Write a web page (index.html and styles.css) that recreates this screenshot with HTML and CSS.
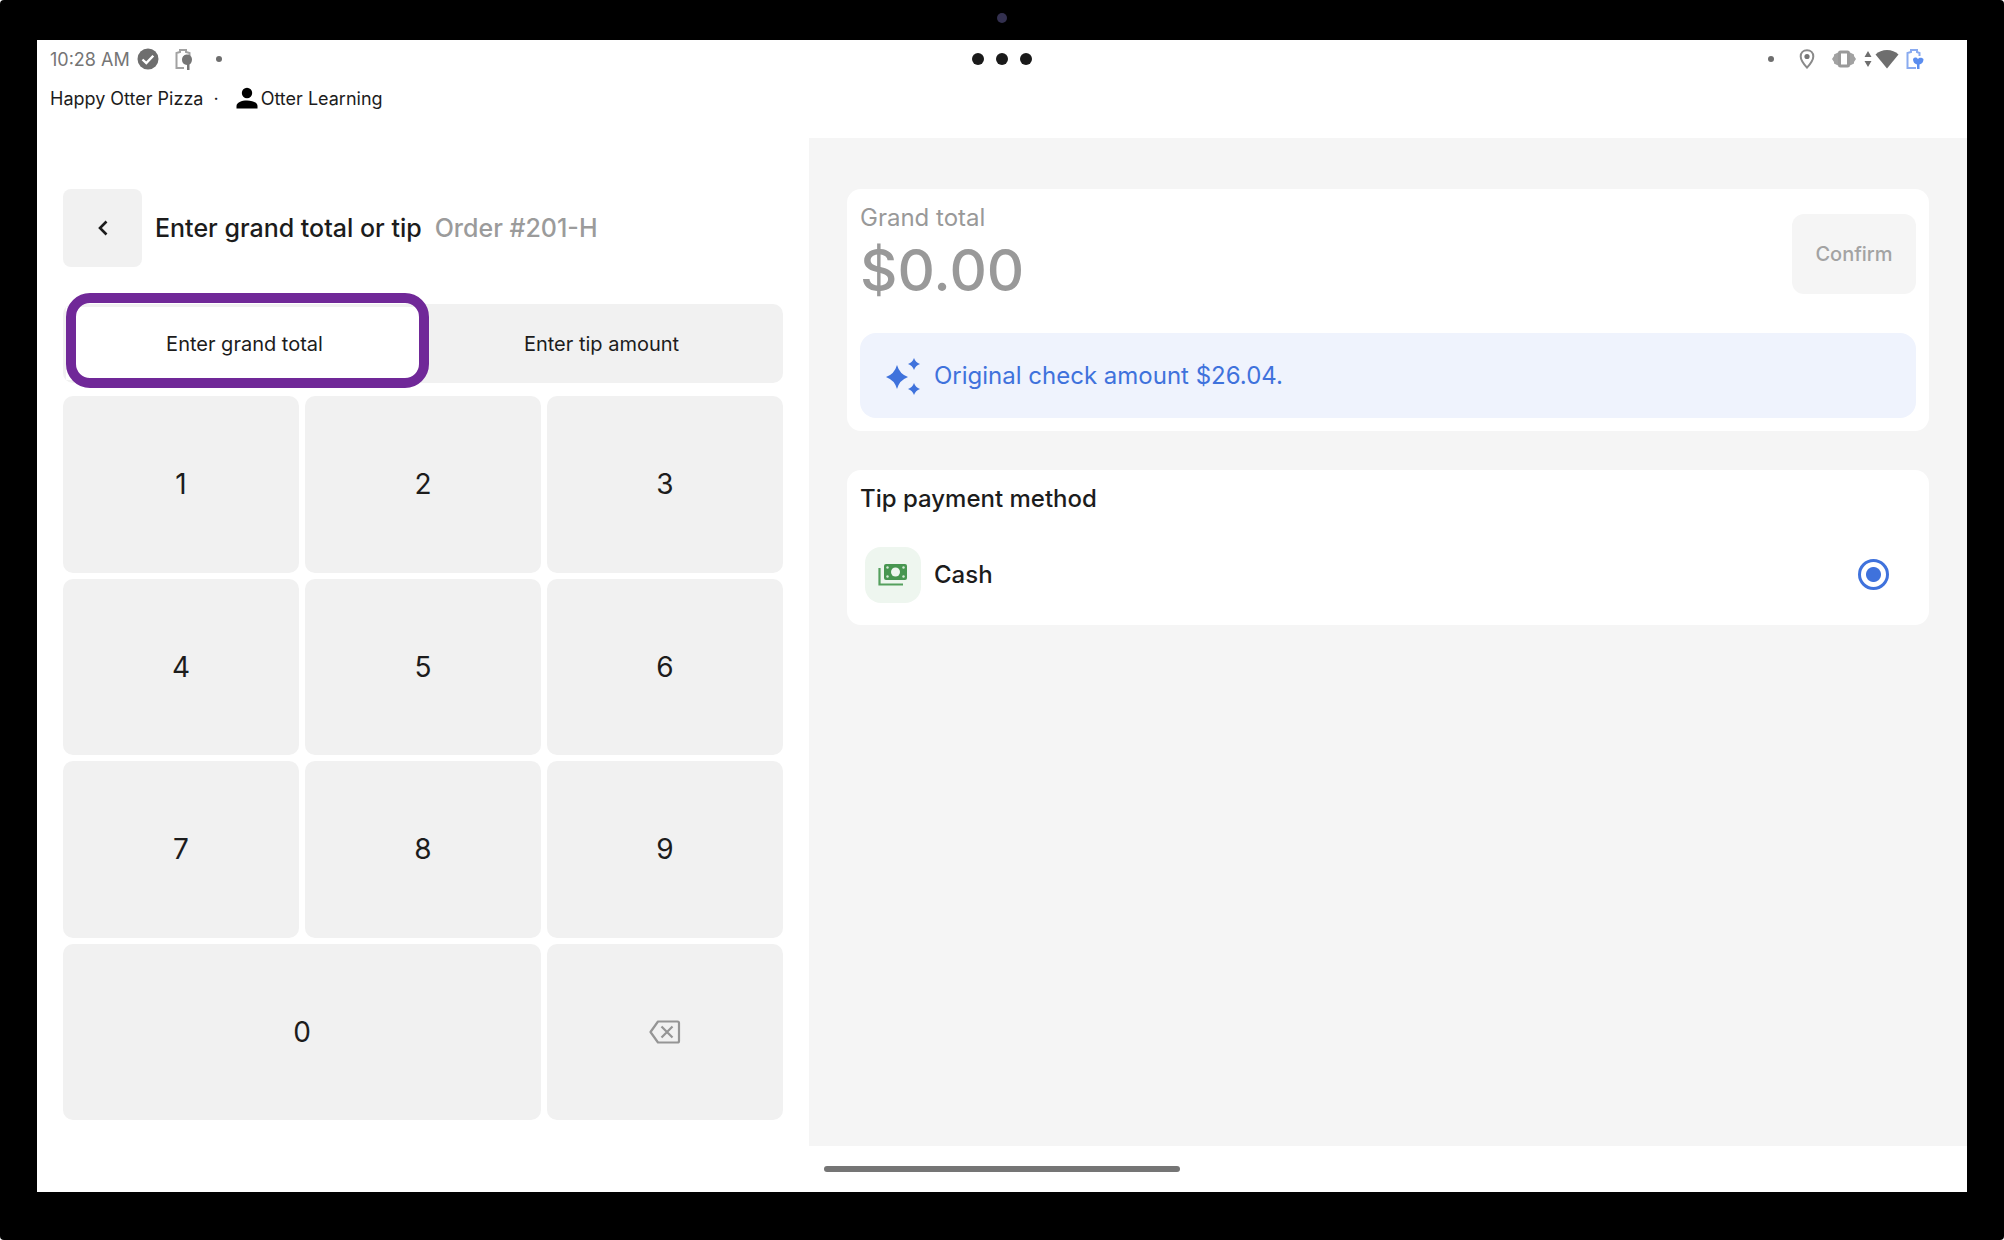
FILE: index.html
```html
<!DOCTYPE html>
<html lang="en">
<head>
    <meta charset="UTF-8">
    <meta name="viewport" content="width=device-width, initial-scale=1.0">
    <title>Enter grand total or tip</title>
    <link rel="stylesheet" href="styles.css">
</head>
<body>
    <div class="device">
        <span class="camera"></span>
        <div class="screen">
            <header class="top">
                <div class="status">
                    <div class="status-left">
                        <span>10:28 AM</span>
                        <svg class="icon-check" width="22" height="22" viewBox="0 0 22 22">
                            <circle cx="11" cy="11" r="10.5" fill="#6e6e6e"/>
                            <path d="M5.5 11.5l3.8 3.6 7-7.4" fill="none" stroke="#fff" stroke-width="2.4"/>
                        </svg>
                        <svg class="icon-battery" width="18" height="22" viewBox="0 0 18 22">
                            <path d="M9 20H1.500V5L5 4V2h6v2l3.500 1v3" fill="none" stroke="#a2a2a2" stroke-width="2"/>
                            <path d="M7 12a5 5 0 0 1 10-1c0 3-1 4.500-2.500 5.500V22H12v-5c-3-.5-5-2-5-5z" fill="#757575"/>
                        </svg>
                        <span class="dot"></span>
                    </div>
                    <div class="more"><i></i><i></i><i></i></div>
                    <div class="status-right">
                        <span class="dot"></span>
                        <svg class="icon-pin" width="16" height="20" viewBox="0 0 16 20">
                            <path d="M8 1.200c-3.700 0-6.300 2.700-6.300 6.200C1.700 11.600 8 18.600 8 18.600s6.300-7 6.300-11.200c0-3.500-2.600-6.200-6.300-6.200z" fill="none" stroke="#8a8a8a" stroke-width="2"/>
                            <circle cx="8" cy="7.500" r="2.600" fill="#757575"/>
                        </svg>
                        <svg class="icon-vibrate" width="24" height="20" viewBox="0 0 24 20">
                            <path d="M0 10l2-3v-1.500l4-2v13l-4-2V13zM24 10l-2-3v-1.500l-4-2v13l4-2V13z" fill="#a2a2a2"/>
                            <rect x="7.500" y="3" width="9" height="14" rx="1" fill="#fff" stroke="#9a9a9a" stroke-width="3"/>
                        </svg>
                        <svg class="icon-data" width="8" height="16" viewBox="0 0 8 16">
                            <path d="M4 0l3.500 6h-7zM4 16l3.500-6h-7z" fill="#6e6e6e"/>
                        </svg>
                        <svg class="icon-wifi" width="24" height="20" viewBox="0 0 24 20">
                            <path d="M12 19.500L.5 5.500C3.500 2.500 7.500 1 12 1s8.500 1.500 11.500 4.500z" fill="#6e6e6e"/>
                        </svg>
                        <svg width="18" height="22" viewBox="0 0 18 22">
                            <path d="M10 20H1.500V5L5 4V2h6v2l2.500 1v3" fill="none" stroke="#8aabf0" stroke-width="2"/>
                            <path d="M7 11c2-2.500 4-1.500 5 0 1-1.500 3.500-2 5.500 0 0 3-1.500 5-4 5.500V21H11v-4.500c-2.500-.5-4-2.500-4-5.500z" fill="#5b8def"/>
                        </svg>
                    </div>
                </div>
                <div class="account">
                    <span>Happy Otter Pizza</span>
                    <span class="sep">·</span>
                    <svg width="22" height="22" viewBox="0 0 22 22">
                        <circle cx="11" cy="6" r="5.200"/>
                        <path d="M.5 21.500v-2.500c0-3.500 5-5.500 10.500-5.500s10.500 2 10.500 5.500v2.500z"/>
                    </svg>
                    <span>Otter Learning</span>
                </div>
            </header>

            <main class="main">
                <section class="entry">
                    <div class="title-row">
                        <button class="back" type="button" aria-label="Back">
                            <svg width="12" height="18" viewBox="0 0 12 18">
                                <path d="M9.500 2.500L3 9l6.500 6.500" fill="none" stroke="#1c1c1c" stroke-width="2.600"/>
                            </svg>
                        </button>
                        <h1>Enter grand total or tip</h1>
                        <span class="order">Order #201-H</span>
                    </div>

                    <div class="tabs">
                        <button class="tab active" type="button">Enter grand total</button>
                        <button class="tab" type="button">Enter tip amount</button>
                    </div>

                    <div class="keypad">
                        <button type="button">1</button>
                        <button type="button">2</button>
                        <button type="button">3</button>
                        <button type="button">4</button>
                        <button type="button">5</button>
                        <button type="button">6</button>
                        <button type="button">7</button>
                        <button type="button">8</button>
                        <button type="button">9</button>
                        <button class="zero" type="button">0</button>
                        <button type="button" aria-label="Delete">
                            <svg width="32" height="24" viewBox="0 0 32 24" fill="none" stroke="#959595" stroke-width="2.200">
                                <path d="M9 1.500h19.500q1.500 0 1.500 1.500v18q0 1.500-1.500 1.500H9L1.500 12z" stroke-linejoin="round"/>
                                <path d="M12.500 6.500l11 11M23.500 6.500l-11 11"/>
                            </svg>
                        </button>
                    </div>
                </section>

                <section class="summary">
                    <div class="card">
                        <div class="total-row">
                            <div>
                                <div class="label">Grand total</div>
                                <div class="amount">$0.00</div>
                            </div>
                            <button class="confirm" type="button" disabled>Confirm</button>
                        </div>
                        <div class="note">
                            <svg width="36" height="38" viewBox="0 0 36 38" fill="#3f72dc">
                                <path d="M12 8q2.500 9 11 12-8.500 3-11 12-2.500-9-11-12 8.500-3 11-12z"/>
                                <path d="M29 1q1.500 4.500 6 6-4.500 1.500-6 6-1.500-4.500-6-6 4.500-1.500 6-6z"/>
                                <path d="M29 26q1.500 4.500 6 6-4.500 1.500-6 6-1.500-4.500-6-6 4.500-1.500 6-6z"/>
                            </svg>
                            <span>Original check amount $26.04.</span>
                        </div>
                    </div>

                    <div class="card">
                        <h2>Tip payment method</h2>
                        <div class="method">
                            <span class="method-icon">
                                <svg width="30" height="24" viewBox="0 0 30 24">
                                    <path d="M1.500 5v16.500H25" fill="none" stroke="#55a05e" stroke-width="2.200"/>
                                    <rect x="6" y="1" width="23" height="16" rx="2" fill="#479650"/>
                                    <circle cx="17.500" cy="9" r="4.500" fill="#eef6ef"/>
                                    <g fill="#d5ead7">
                                        <circle cx="9.500" cy="4.500" r="1.200"/>
                                        <circle cx="25.500" cy="4.500" r="1.200"/>
                                        <circle cx="9.500" cy="13.500" r="1.200"/>
                                        <circle cx="25.500" cy="13.500" r="1.200"/>
                                    </g>
                                </svg>
                            </span>
                            <label for="cash">Cash</label>
                            <input type="radio" id="cash" name="method" checked>
                        </div>
                    </div>
                </section>
            </main>

            <footer class="nav"><span class="pill"></span></footer>
        </div>
    </div>
</body>
</html>
```
FILE: styles.css
```css
* {
    box-sizing: border-box;
}
body {
    margin: 0;
    background: #fff;
    color: #1c1c1c;
    font-family: Inter, "Liberation Sans", sans-serif;
}
h1, h2 {
    margin: 0;
    font-weight: 500;
}
svg {
    display: block;
    flex: none;
}
button {
    border: 0;
    padding: 0;
    background: #f1f1f1;
    color: inherit;
    font-family: inherit;
    cursor: pointer;
}

/* tablet frame */
.device {
    position: relative;
    display: flex;
    min-height: 100vh;
    padding: 40px 37px 48px;
    background: #000;
    border-radius: 4px;
}
.camera {
    position: absolute;
    top: 13px;
    left: 50%;
    width: 10px;
    height: 10px;
    margin-left: -5px;
    border-radius: 50%;
    background: #33304f;
}
.screen {
    flex: 1;
    display: flex;
    flex-direction: column;
    background: #fff;
}

/* status bar */
.top {
    height: 98px;
    font-size: 18px;
}
.status {
    display: grid;
    grid-template-columns: 1fr auto 1fr;
    align-items: center;
    height: 38px;
    padding: 0 43px 0 13px;
    color: #757575;
}
.status-left, .status-right, .more, .account {
    display: flex;
    align-items: center;
}
.status-right {
    justify-content: flex-end;
}
.icon-check {
    margin-left: 7px;
}
.icon-battery {
    margin: 0 23px 0 16px;
}
.dot {
    width: 6px;
    height: 6px;
    border-radius: 50%;
    background: #6e6e6e;
}
.more {
    gap: 12px;
    margin-left: 30px;
}
.more i {
    width: 12px;
    height: 12px;
    border-radius: 50%;
    background: #1a1a1a;
}
.icon-pin {
    margin: 0 17px 0 25px;
}
.icon-data {
    margin: 0 3px 0 8px;
}
.icon-wifi {
    margin-right: 7px;
}
.account {
    height: 40px;
    padding-left: 13px;
}
.sep {
    margin: 0 17px 0 10px;
}
.account svg {
    margin-right: 3px;
}

.main {
    flex: 1;
    display: flex;
}

/* left side */
.entry {
    flex: 0 0 40%;
    display: flex;
    flex-direction: column;
    padding: 51px 26px 26px;
}
.title-row {
    display: flex;
    align-items: center;
    font-size: 25px;
    font-weight: 500;
}
.back {
    display: flex;
    align-items: center;
    justify-content: center;
    width: 79px;
    height: 78px;
    margin-right: 13px;
    border-radius: 8px;
}
h1 {
    font-size: 25px;
}
.order {
    margin-left: 13px;
    color: #9b9b9b;
}
.tabs {
    display: flex;
    height: 79px;
    margin: 37px 0 13px;
    padding: 3px;
    border-radius: 10px;
    background: #f1f1f1;
}
.tab {
    position: relative;
    flex: 1;
    font-size: 20px;
}
.tab.active {
    z-index: 1;
    background: #fff;
}
/* highlight ring round the selected tab */
.tab.active::after {
    content: "";
    position: absolute;
    inset: -14px -6px -8px 0;
    border: 10px solid #702898;
    border-radius: 24px;
}
.keypad {
    flex: 1;
    display: grid;
    grid-template-columns: repeat(3, 1fr);
    grid-auto-rows: 1fr;
    gap: 6px;
}
.keypad button {
    display: flex;
    align-items: center;
    justify-content: center;
    border-radius: 10px;
    font-size: 28px;
}
.keypad .zero {
    grid-column: span 2;
}

/* right side */
.summary {
    flex: 1;
    display: flex;
    flex-direction: column;
    gap: 39px;
    padding: 51px 38px;
    background: #f5f5f5;
}
.card {
    padding: 13px;
    border-radius: 14px;
    background: #fff;
}
.total-row {
    display: flex;
    align-items: center;
    justify-content: space-between;
    margin-bottom: 27px;
    color: #999;
}
.label {
    font-size: 24px;
    line-height: 32px;
}
.amount {
    font-size: 58px;
    font-weight: 500;
    line-height: 72px;
}
.confirm {
    width: 124px;
    height: 80px;
    border-radius: 12px;
    background: #f5f5f5;
    color: #a3a3a3;
    font-size: 20px;
    font-weight: 500;
}
.note {
    display: flex;
    align-items: center;
    gap: 13px;
    height: 85px;
    padding: 0 25px;
    border-radius: 16px;
    background: #eff3fd;
    color: #3f72dc;
    font-size: 24px;
}
h2 {
    font-size: 24px;
    font-weight: 500;
    line-height: 32px;
}
.method {
    display: flex;
    align-items: center;
    height: 75px;
    margin-top: 22px;
    padding: 0 27px 0 5px;
    font-size: 24px;
    font-weight: 500;
}
.method-icon {
    display: flex;
    align-items: center;
    justify-content: center;
    width: 56px;
    height: 56px;
    margin-right: 13px;
    border-radius: 16px;
    background: #eef6ef;
}
.method label {
    flex: 1;
}
.method input {
    appearance: none;
    width: 31px;
    height: 31px;
    margin: 0;
    border: 3px solid #3f72dc;
    border-radius: 50%;
    background: radial-gradient(circle, #3f72dc 7px, #fff 8px);
}

.nav {
    display: flex;
    align-items: center;
    justify-content: center;
    height: 46px;
}
.pill {
    width: 356px;
    height: 6px;
    border-radius: 3px;
    background: #757575;
}
```
